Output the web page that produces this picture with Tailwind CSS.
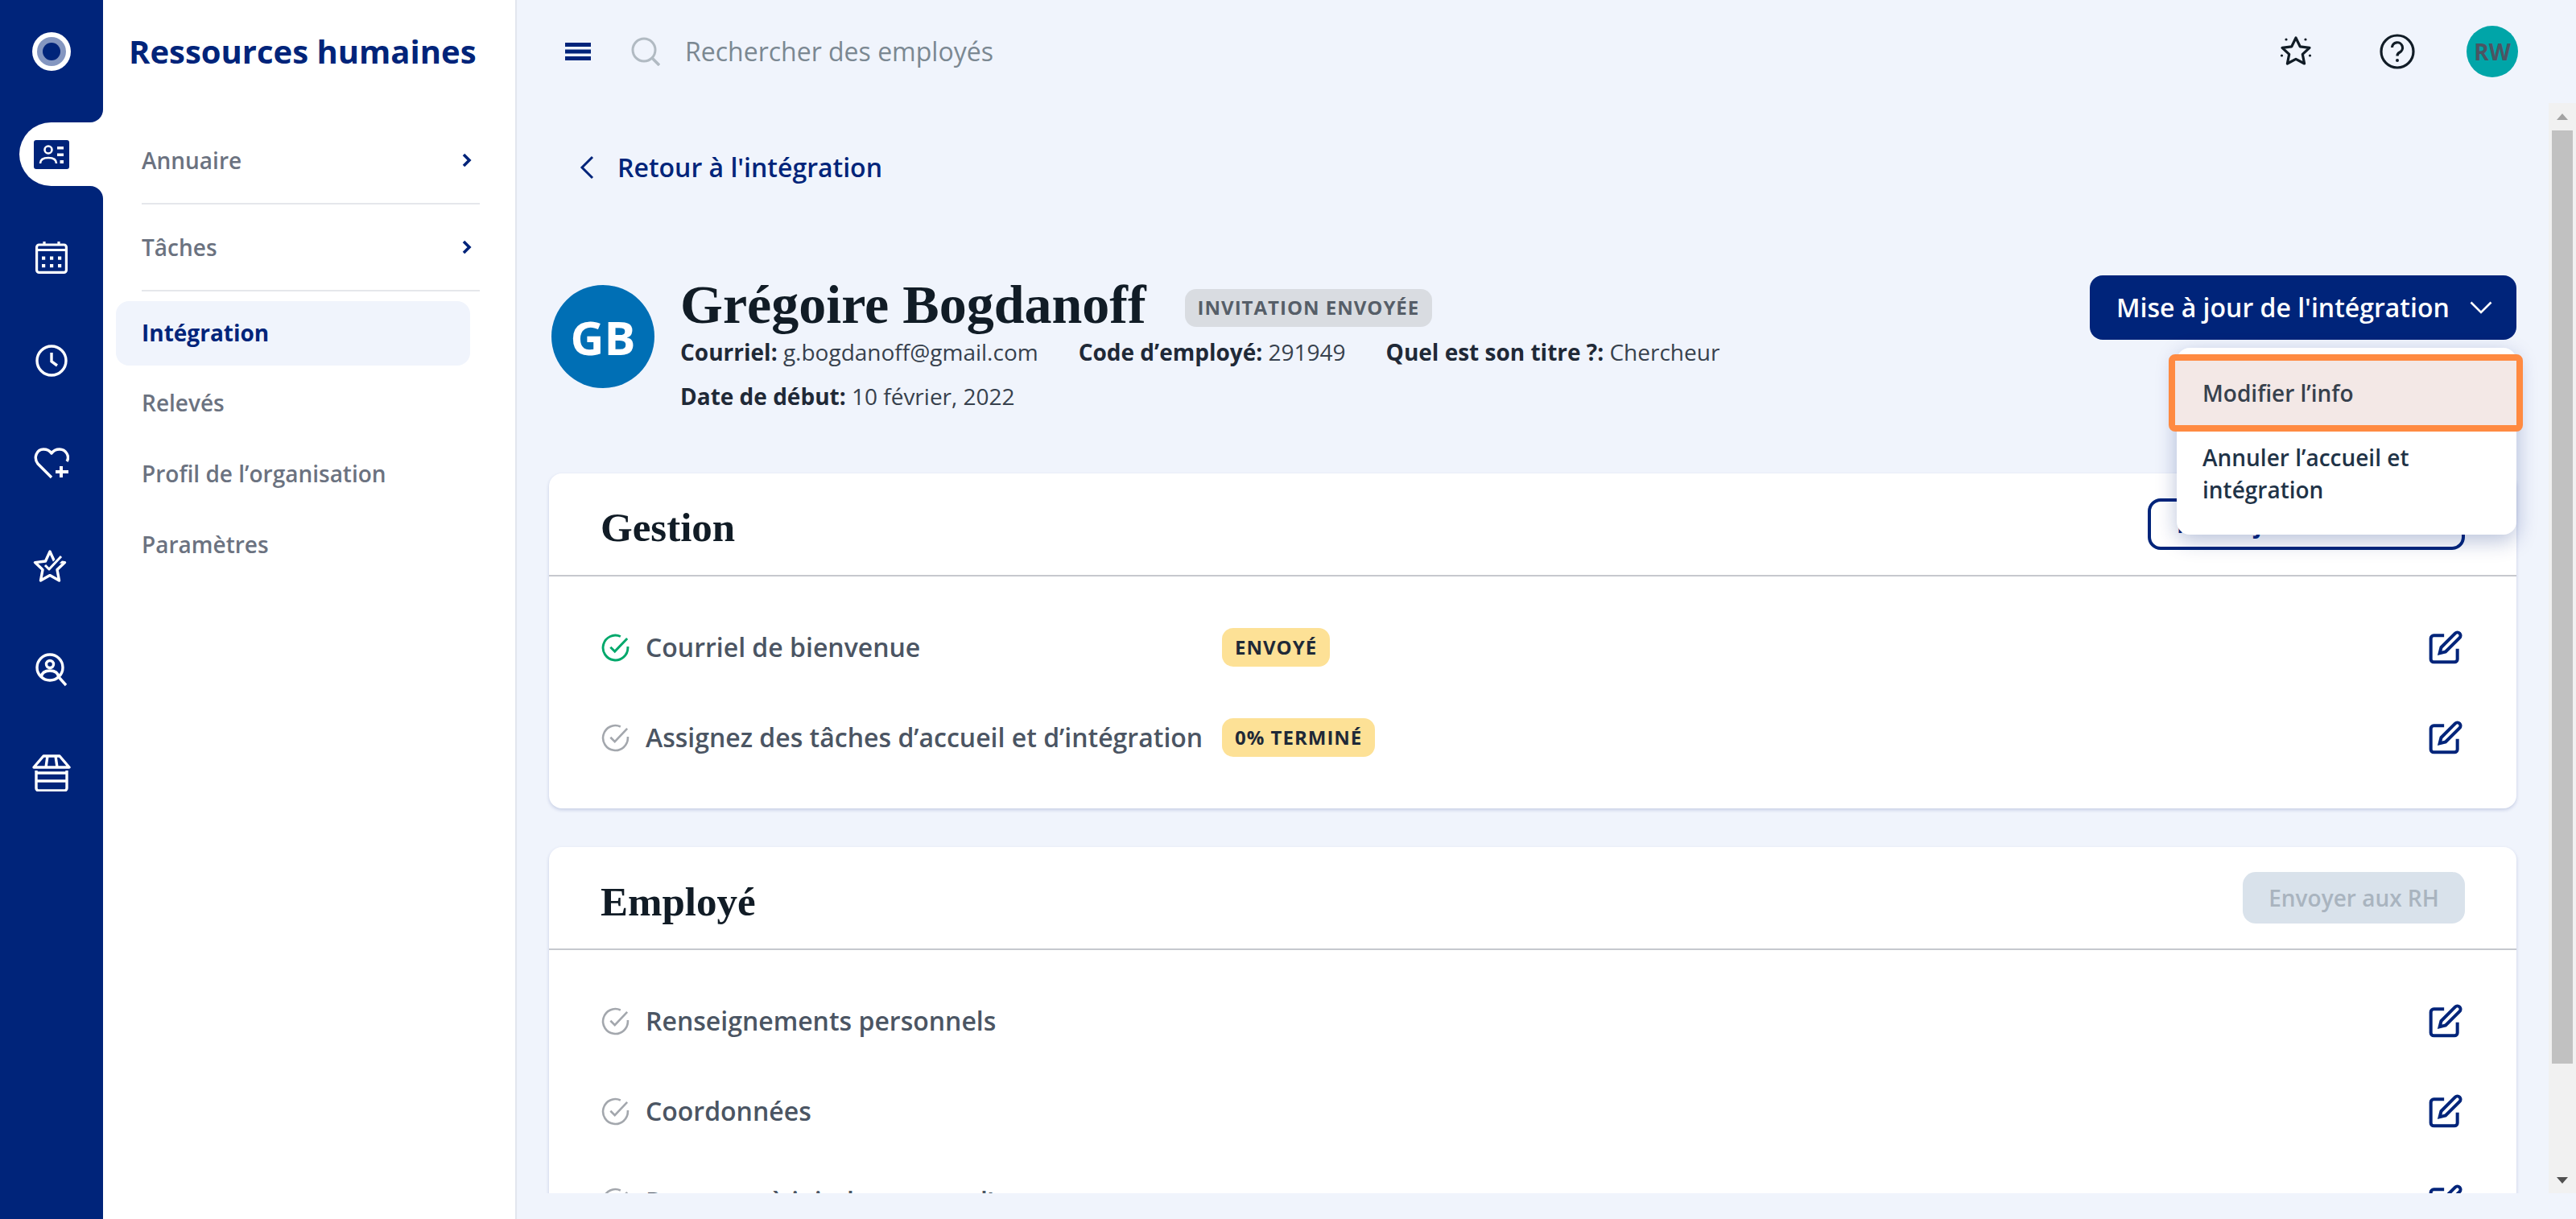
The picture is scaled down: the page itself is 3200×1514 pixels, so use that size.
<!DOCTYPE html>
<html lang="fr">
<head>
<meta charset="utf-8">
<title>Intégration</title>
<script src="https://cdn.jsdelivr.net/npm/@tailwindcss/browser@4"></script>
</head>
<body class="m-0">
<div class="flex w-[3200px] h-[1514px] overflow-hidden bg-[#f0f4fc] font-['Open_Sans',sans-serif]">
  <!-- Rail -->
  <aside class="w-[128px] shrink-0 flex flex-col bg-white text-white">
    <div class="h-[152px] bg-[#00247a] rounded-br-[16px] flex justify-center pt-[40px]">
      <svg class="w-[48px] h-[48px]" viewBox="0 0 48 48"><circle cx="24" cy="24" r="24" fill="#fff"/><circle cx="24" cy="24" r="18" fill="#8496c0"/><circle cx="24" cy="24" r="11" fill="#00247a"/></svg>
    </div>
    <div class="h-[79px] bg-[#00247a]">
      <div class="h-full ml-[24px] bg-white rounded-l-[40px] flex items-center pl-[18px]">
        <svg class="w-[44px] h-[36px]" viewBox="0 0 44 36"><rect width="44" height="36" rx="3" fill="#00247a"/><circle cx="18" cy="12" r="4.5" fill="none" stroke="#fff" stroke-width="2.6"/><path d="M8 29c0-5 4-7 10-7s10 2 10 7" fill="none" stroke="#fff" stroke-width="2.6"/><path d="M29 8h8v3.5h-8zM29 16.500h8v3.500h-8zM32.500 25h4.500v4h-4.500z" fill="#fff"/></svg>
      </div>
    </div>
    <div class="flex-1 bg-[#00247a] rounded-tr-[16px] pt-[25px] flex flex-col">
      <div class="h-[128px] flex items-center justify-center">
        <svg class="w-[40px] h-[40px]" viewBox="0 0 40 40" fill="none" stroke="#fff" stroke-width="3.2"><rect x="1.600" y="4" width="36.800" height="34.400" rx="3"/><path d="M2 10.500h36M11 0v5M29 0v5"/><g fill="#fff" stroke="none"><rect x="8" y="18.500" width="4.200" height="4.200"/><rect x="18" y="18.500" width="4.200" height="4.200"/><rect x="28" y="18.500" width="4.200" height="4.200"/><rect x="8" y="28" width="4.200" height="4.200"/><rect x="18" y="28" width="4.200" height="4.200"/><rect x="28" y="28" width="4.200" height="4.200"/></g></svg>
      </div>
      <div class="h-[128px] flex items-center justify-center">
        <svg class="w-[40px] h-[40px]" viewBox="0 0 40 40" fill="none" stroke="#fff" stroke-width="3.4"><circle cx="20" cy="20" r="18"/><path d="M20 10v11l7 5" /></svg>
      </div>
      <div class="h-[128px] flex items-center justify-center">
        <svg class="w-[44px] h-[40px]" viewBox="0 0 44 40" fill="none" stroke="#fff" stroke-width="3.4" stroke-linejoin="round"><path d="M22 37 5 20C-1 12 4 2 12 2c4 0 8 2 10 5 2-3 6-5 10-5 8 0 13 9 9 15"/><path d="M34 23v14M27 30h16" stroke-width="4"/></svg>
      </div>
      <div class="h-[128px] flex items-center justify-center pr-[4px]">
        <svg class="w-[42px] h-[42px]" viewBox="0 0 42 42" fill="none" stroke="#fff" stroke-width="3.400" stroke-linejoin="round"><path d="M21 2l5.500 12 13 1.600-9.500 9 2.500 13.400-11.500-6.400-11.500 6.400 2.500-13.400-9.500-9 13-1.600z"/><path d="M15 20l5 5L38 6" stroke="#00247a" stroke-width="7"/><path d="M15 19l5 5L35 8" stroke-width="3"/></svg>
      </div>
      <div class="h-[128px] flex items-center justify-center">
        <svg class="w-[40px] h-[42px]" viewBox="0 0 40 42" fill="none" stroke="#fff" stroke-width="3.400"><circle cx="18" cy="18" r="16"/><circle cx="18" cy="14" r="4.500"/><path d="M7 30c1-6 5-8 11-8s10 2 11 8"/><path d="M29 30l9 10"/></svg>
      </div>
      <div class="h-[128px] flex items-center justify-center">
        <svg class="w-[48px] h-[46px]" viewBox="0 0 48 46" fill="none" stroke="#fff" stroke-width="3.400" stroke-linejoin="round"><path d="M14 2h20l12 14H2zM19 2l-2 14M29 2l2 14"/><path d="M5 20v22a3 3 0 0 0 3 3h32a3 3 0 0 0 3-3V20M5 23h38M5 33h38"/></svg>
      </div>
    </div>
  </aside>

  <!-- Sidebar -->
  <nav class="w-[514px] shrink-0 bg-white border-r-2 border-[#e2e6ee] flex flex-col text-[28px] font-semibold text-[#6b7280]">
    <div class="h-[128px] pl-[32px] flex items-center text-[40px] font-bold text-[#00247a] whitespace-nowrap">Ressources humaines</div>
    <div class="mt-[20px] ml-[48px] w-[420px] h-[106px] pb-[3px] border-b-2 border-[#e5e7eb] flex items-center justify-between">
      <span>Annuaire</span>
      <svg class="w-[12px] h-[18px] mr-[10px]" viewBox="0 0 12 18" fill="none" stroke="#00247a" stroke-width="3.600"><path d="M2 2l7 7-7 7"/></svg>
    </div>
    <div class="ml-[48px] w-[420px] h-[108px] border-b-2 border-[#e5e7eb] flex items-center justify-between">
      <span>Tâches</span>
      <svg class="w-[12px] h-[18px] mr-[10px]" viewBox="0 0 12 18" fill="none" stroke="#00247a" stroke-width="3.600"><path d="M2 2l7 7-7 7"/></svg>
    </div>
    <div class="mt-[12px] ml-[16px] w-[440px] h-[80px] pb-[3px] rounded-[16px] bg-[#f0f4fc] pl-[32px] flex items-center font-bold text-[#00247a]">Intégration</div>
    <div class="mt-[2px] ml-[48px] h-[88px] flex items-center">Relevés</div>
    <div class="ml-[48px] h-[88px] flex items-center">Profil de l’organisation</div>
    <div class="ml-[48px] h-[88px] flex items-center">Paramètres</div>
  </nav>

  <!-- Main -->
  <main class="flex-1 min-w-0 flex flex-col">
    <header class="h-[128px] shrink-0 flex items-center pl-[60px] pr-[72px]">
      <svg class="w-[32px] h-[22px]" viewBox="0 0 32 22" fill="#00247a"><rect width="32" height="5"/><rect y="8.500" width="32" height="5"/><rect y="17" width="32" height="5"/></svg>
      <svg class="ml-[50px] w-[36px] h-[36px]" viewBox="0 0 36 36" fill="none" stroke="#b1bac2" stroke-width="3"><circle cx="16" cy="16" r="14"/><path d="M26 26l9 9" stroke-width="3.600"/></svg>
      <span class="ml-[31px] text-[32px] text-[#7b8892]">Rechercher des employés</span>
      <svg class="ml-auto w-[40px] h-[40px]" viewBox="0 0 40 40" fill="none" stroke="#111c26" stroke-width="3.200" stroke-linejoin="round"><path d="M20 3l5.200 10.800 11.800 1.500-8.700 8.100 2.300 11.600-10.600-5.700-10.600 5.700 2.300-11.600-8.700-8.100 11.800-1.500z"/><g fill="#111c26" stroke="none"><circle cx="8" cy="5" r="1.600"/><circle cx="32" cy="5" r="1.600"/><circle cx="2.500" cy="25" r="1.600"/><circle cx="37.500" cy="25" r="1.600"/></g></svg>
      <svg class="ml-[84px] w-[44px] h-[44px]" viewBox="0 0 44 44" fill="none" stroke="#111c26" stroke-width="3.200"><circle cx="22" cy="22" r="20"/><path d="M15.500 17a6.500 6.500 0 1 1 9.500 6c-2 1-3 2.300-3 4.500" /><circle cx="22" cy="33" r="2" fill="#111c26" stroke="none"/></svg>
      <div class="ml-[64px] w-[64px] h-[64px] rounded-full bg-[#00a5a8] flex items-center justify-center text-[28px] font-bold text-[#4b5563]">RW</div>
    </header>

    <div class="h-[1354px] shrink-0 flex">
      <div class="flex-1 min-w-0 overflow-hidden px-[40px]">
        <div class="pt-[56px] h-[104px]">
          <div class="h-[48px] flex items-center text-[32px] font-semibold text-[#00247a]">
            <svg class="ml-[38px] w-[18px] h-[30px]" viewBox="0 0 18 30" fill="none" stroke="#00247a" stroke-width="3"><path d="M16 2 3 15l13 13"/></svg>
            <span class="ml-[29px]">Retour à l'intégration</span>
          </div>
        </div>
        <div class="mt-[110px] h-[246px] flex justify-between items-start">
          <div class="flex pt-[12px] pl-[3px]">
            <div class="w-[128px] h-[128px] rounded-full bg-[#006fb5] flex items-center justify-center text-[58px] font-bold text-white">GB</div>
            <div class="ml-[32px]">
              <div class="h-[56px] flex items-center">
                <h1 class="font-['Liberation_Serif',serif] font-bold text-[68px] leading-[56px] text-[#111c26] relative top-[-4px]">Grégoire Bogdanoff</h1>
                <span class="ml-[48px] h-[47px] px-[16px] rounded-[14px] bg-[#d9dce1] flex items-center text-[24px] font-bold tracking-[1px] text-[#565e68]">INVITATION ENVOYÉE</span>
              </div>
              <div class="text-[28px] leading-[55px] text-[#37414d] flex">
                <span><b class="font-bold text-[#1f2937]">Courriel:</b> g.bogdanoff@gmail.com</span>
                <span class="ml-[50px]"><b class="font-bold text-[#1f2937]">Code d’employé:</b> 291949</span>
                <span class="ml-[50px]"><b class="font-bold text-[#1f2937]">Quel est son titre ?:</b> Chercheur</span>
              </div>
              <div class="text-[28px] leading-[55px] text-[#37414d]"><b class="font-bold text-[#1f2937]">Date de début:</b> 10 février, 2022</div>
            </div>
          </div>
          <div class="relative z-10">
            <div class="w-[530px] h-[80px] rounded-[16px] bg-[#00247a] flex items-center pl-[33px] text-[32px] font-semibold text-white whitespace-nowrap">
              <span>Mise à jour de l'intégration</span>
              <svg class="ml-[25px] w-[28px] h-[16px]" viewBox="0 0 28 16" fill="none" stroke="#fff" stroke-width="2.600"><path d="M1.500 1.500 14 14 26.500 1.500"/></svg>
            </div>
            <div class="absolute top-[90px] right-0 w-[422px] h-[232px] rounded-[16px] bg-white shadow-[0_8px_26px_rgba(0,36,122,0.28)] text-[28px] font-semibold leading-[40px] text-[#1f3347]">
              <div class="absolute top-[8px] left-[-10px] right-[-8px] h-[96px] rounded-[8px] border-[8px] border-[#ff8a41] bg-[#f3e8e6] flex items-center pl-[34px] text-[#37414d]">Modifier l’info</div>
              <div class="absolute top-[116px] left-[32px] right-[32px]">Annuler l’accueil et intégration</div>
            </div>
          </div>
        </div>

        <section class="rounded-[16px] bg-white shadow-[0_2px_4px_rgba(0,36,122,0.18)] h-[416px]">
          <div class="h-[128px] border-b-2 border-[#c6c8ce] px-[64px] flex items-center justify-between">
            <h2 class="font-['Liberation_Serif',serif] font-bold text-[51px] text-[#111c26] relative top-[4px]">Gestion</h2>
            <div class="w-[394px] h-[64px] rounded-[16px] border-[4px] border-[#00247a] pl-[32px] flex items-center text-[28px] font-bold text-[#00247a] whitespace-nowrap overflow-hidden">Mise à jour du statut</div>
          </div>
          <div class="pt-[32px] px-[64px] text-[32px] font-semibold text-[#4b5563]">
            <div class="h-[112px] flex items-center">
              <svg class="w-[37px] h-[37px] shrink-0" viewBox="0 0 24 24" fill="none" stroke="#00a86b" stroke-width="1.900"><path d="M22 11v1a10 10 0 1 1-5.900-9.100"/><path d="M8 11.500l3.500 3.500L21.500 4.500"/></svg>
              <span class="ml-[19px] w-[716px] shrink-0 whitespace-nowrap">Courriel de bienvenue</span>
              <span class="h-[48px] px-[16px] rounded-[14px] bg-[#fde196] flex items-center text-[24px] font-bold tracking-[1px] text-[#1f2937]">ENVOYÉ</span>
              <svg class="ml-auto mr-[2px] w-[44px] h-[44px]" viewBox="0 0 24 24" fill="none" stroke="#00247a" stroke-width="2.200"><path d="M11 4H4a2 2 0 0 0-2 2v14a2 2 0 0 0 2 2h14a2 2 0 0 0 2-2v-7"/><path d="M18.500 2.500a2.121 2.121 0 0 1 3 3L12 15l-4 1 1-4 9.500-9.500z"/></svg>
            </div>
            <div class="h-[112px] flex items-center">
              <svg class="w-[37px] h-[37px] shrink-0" viewBox="0 0 24 24" fill="none" stroke="#a3a7ad" stroke-width="1.700"><path d="M22 11v1a10 10 0 1 1-5.900-9.100"/><path d="M8 11.500l3.500 3.500L21.500 4.500"/></svg>
              <span class="ml-[19px] w-[716px] shrink-0 whitespace-nowrap">Assignez des tâches d’accueil et d’intégration</span>
              <span class="h-[48px] px-[16px] rounded-[14px] bg-[#fde196] flex items-center text-[24px] font-bold tracking-[1px] text-[#1f2937]">0% TERMINÉ</span>
              <svg class="ml-auto mr-[2px] w-[44px] h-[44px]" viewBox="0 0 24 24" fill="none" stroke="#00247a" stroke-width="2.200"><path d="M11 4H4a2 2 0 0 0-2 2v14a2 2 0 0 0 2 2h14a2 2 0 0 0 2-2v-7"/><path d="M18.500 2.500a2.121 2.121 0 0 1 3 3L12 15l-4 1 1-4 9.500-9.500z"/></svg>
            </div>
          </div>
        </section>

        <section class="mt-[48px] rounded-[16px] bg-white shadow-[0_2px_4px_rgba(0,36,122,0.18)] h-[600px]">
          <div class="h-[128px] border-b-2 border-[#c6c8ce] px-[64px] flex items-center justify-between">
            <h2 class="font-['Liberation_Serif',serif] font-bold text-[51px] text-[#111c26] relative top-[5px]">Employé</h2>
            <div class="w-[276px] h-[64px] rounded-[16px] bg-[#d9e2eb] flex items-center justify-center text-[28px] font-semibold text-[#a9b4bf]">Envoyer aux RH</div>
          </div>
          <div class="pt-[32px] px-[64px] text-[32px] font-semibold text-[#4b5563]">
            <div class="h-[112px] flex items-center">
              <svg class="w-[37px] h-[37px] shrink-0" viewBox="0 0 24 24" fill="none" stroke="#a3a7ad" stroke-width="1.700"><path d="M22 11v1a10 10 0 1 1-5.900-9.100"/><path d="M8 11.500l3.500 3.500L21.500 4.500"/></svg>
              <span class="ml-[19px] whitespace-nowrap">Renseignements personnels</span>
              <svg class="ml-auto mr-[2px] w-[44px] h-[44px]" viewBox="0 0 24 24" fill="none" stroke="#00247a" stroke-width="2.200"><path d="M11 4H4a2 2 0 0 0-2 2v14a2 2 0 0 0 2 2h14a2 2 0 0 0 2-2v-7"/><path d="M18.500 2.500a2.121 2.121 0 0 1 3 3L12 15l-4 1 1-4 9.500-9.500z"/></svg>
            </div>
            <div class="h-[112px] flex items-center">
              <svg class="w-[37px] h-[37px] shrink-0" viewBox="0 0 24 24" fill="none" stroke="#a3a7ad" stroke-width="1.700"><path d="M22 11v1a10 10 0 1 1-5.900-9.100"/><path d="M8 11.500l3.500 3.500L21.500 4.500"/></svg>
              <span class="ml-[19px] whitespace-nowrap">Coordonnées</span>
              <svg class="ml-auto mr-[2px] w-[44px] h-[44px]" viewBox="0 0 24 24" fill="none" stroke="#00247a" stroke-width="2.200"><path d="M11 4H4a2 2 0 0 0-2 2v14a2 2 0 0 0 2 2h14a2 2 0 0 0 2-2v-7"/><path d="M18.500 2.500a2.121 2.121 0 0 1 3 3L12 15l-4 1 1-4 9.500-9.500z"/></svg>
            </div>
            <div class="h-[112px] flex items-center">
              <svg class="w-[37px] h-[37px] shrink-0" viewBox="0 0 24 24" fill="none" stroke="#a3a7ad" stroke-width="1.700"><path d="M22 11v1a10 10 0 1 1-5.900-9.100"/><path d="M8 11.500l3.500 3.500L21.500 4.500"/></svg>
              <span class="ml-[19px] whitespace-nowrap">Personne à joindre en cas d’urgence</span>
              <svg class="ml-auto mr-[2px] w-[44px] h-[44px]" viewBox="0 0 24 24" fill="none" stroke="#00247a" stroke-width="2.200"><path d="M11 4H4a2 2 0 0 0-2 2v14a2 2 0 0 0 2 2h14a2 2 0 0 0 2-2v-7"/><path d="M18.500 2.500a2.121 2.121 0 0 1 3 3L12 15l-4 1 1-4 9.500-9.500z"/></svg>
            </div>
          </div>
        </section>
      </div>

      <!-- Scrollbar -->
      <div class="w-[34px] shrink-0 bg-[#f1f1f1] flex flex-col items-center">
        <div class="h-[34px] flex items-center justify-center">
          <svg class="w-[14px] h-[8px]" viewBox="0 0 14 8" fill="#a3a3a3"><path d="M7 0l7 8H0z"/></svg>
        </div>
        <div class="w-[26px] h-[1159px] bg-[#c1c1c1]"></div>
        <div class="flex-1 flex items-end justify-center pb-[12px]">
          <svg class="w-[14px] h-[8px]" viewBox="0 0 14 8" fill="#505050"><path d="M0 0h14L7 8z"/></svg>
        </div>
      </div>
    </div>
  </main>
</div>
</body>
</html>
